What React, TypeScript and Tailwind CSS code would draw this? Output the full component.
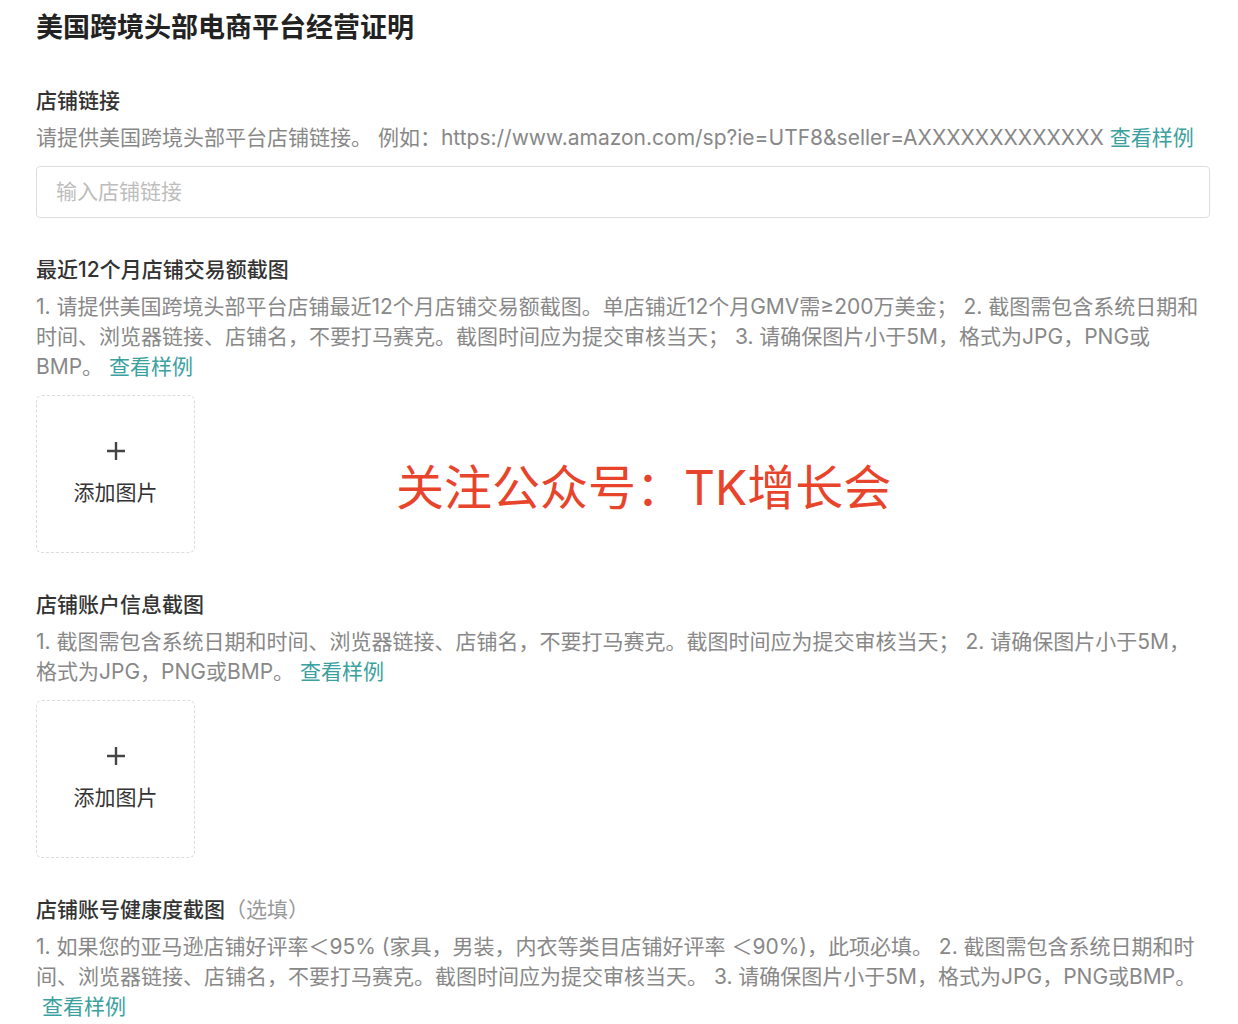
const font = "font-['Inter','Noto_Sans_CJK_SC',sans-serif]";

function SampleLink({ className = "" }: { className?: string }) {
  return <span className={`text-[#3aa19e] ${className}`}>查看样例</span>;
}

function Label({ children }: { children: React.ReactNode }) {
  return <div className="mt-[37px] text-[21px] leading-[30px] font-medium text-[#333]">{children}</div>;
}

function Desc({ children }: { children: React.ReactNode }) {
  return <p className="mt-[7px] text-[21px] leading-[30px] whitespace-nowrap text-[#888]">{children}</p>;
}

function UploadBox() {
  return (
    <div className="mt-[13px] flex h-[158px] w-[159px] flex-col items-center justify-center rounded-md border border-dashed border-[#dcdcdc]">
      <svg width="20" height="20" viewBox="0 0 20 20" className="text-[#444]">
        <path d="M10 1v18M1 10h18" stroke="currentColor" strokeWidth="2.4" />
      </svg>
      <span className="mt-[17px] text-[21px] leading-[30px] text-[#333]">添加图片</span>
    </div>
  );
}

export default function App() {
  return (
    <div className={`relative min-h-[1024px] bg-white pl-[36px] pr-[28px] pt-[10px] ${font}`}>
      <h1 className="text-[27px] leading-[36px] font-bold text-[#222]">美国跨境头部电商平台经营证明</h1>

      <div className="mt-[40px] text-[21px] leading-[30px] font-medium text-[#333]">店铺链接</div>
      <Desc>
        请提供美国跨境头部平台店铺链接。 例如：https://www.amazon.com/sp?ie=UTF8&amp;seller=AXXXXXXXXXXXXX <SampleLink />
      </Desc>
      <div className="mt-[13px] flex h-[52px] items-center rounded-[4px] border border-[#dedede] px-[19px]">
        <span className="text-[21px] text-[#bdbdbd]">输入店铺链接</span>
      </div>

      <Label>最近12个月店铺交易额截图</Label>
      <Desc>
        1. 请提供美国跨境头部平台店铺最近12个月店铺交易额截图。单店铺近12个月GMV需≥200万美金； 2. 截图需包含系统日期和
        <br />
        时间、浏览器链接、店铺名，不要打马赛克。截图时间应为提交审核当天； 3. 请确保图片小于5M，格式为JPG，PNG或
        <br />
        BMP。 <SampleLink />
      </Desc>
      <UploadBox />

      <Label>店铺账户信息截图</Label>
      <Desc>
        1. 截图需包含系统日期和时间、浏览器链接、店铺名，不要打马赛克。截图时间应为提交审核当天； 2. 请确保图片小于5M，
        <br />
        格式为JPG，PNG或BMP。 <SampleLink />
      </Desc>
      <UploadBox />

      <Label>
        店铺账号健康度截图<span className="font-normal text-[#999]">（选填）</span>
      </Label>
      <Desc>
        1. 如果您的亚马逊店铺好评率＜95% (家具，男装，内衣等类目店铺好评率 ＜90%)，此项必填。 2. 截图需包含系统日期和时
        <br />
        间、浏览器链接、店铺名，不要打马赛克。截图时间应为提交审核当天。 3. 请确保图片小于5M，格式为JPG，PNG或BMP。
        <br />
        <SampleLink className="ml-[6px]" />
      </Desc>

      <div className="absolute left-[396px] top-[462px] text-[48px] leading-[52px] font-normal text-[#e8442c]">
        关注公众号：TK增长会
      </div>
    </div>
  );
}
